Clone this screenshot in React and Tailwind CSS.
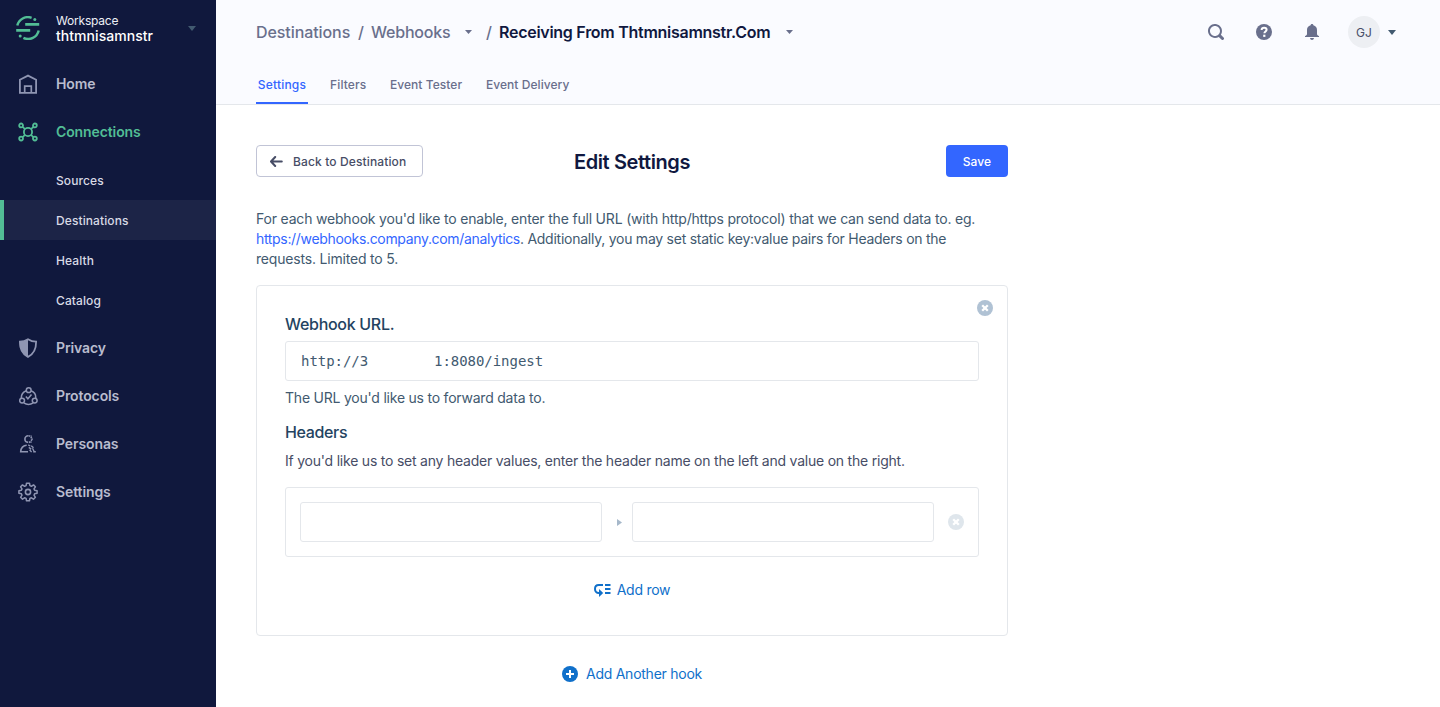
import React from "react";

const Svg = ({ size = 20, box, className = "", children }) => (
  <svg
    width={size}
    height={size}
    viewBox={`0 0 ${box || size} ${box || size}`}
    fill="none"
    className={`shrink-0 ${className}`}
  >
    {children}
  </svg>
);

const Logo = () => (
  <Svg size={24}>
    <g stroke="#52bd95" strokeWidth="2.4">
      <path d="M1.3 9.6A10.8 10.8 0 0 1 15.6 1.8" />
      <path d="M22.7 14.4A10.8 10.8 0 0 1 7.4 21.8" />
      <path d="M9.2 8.4H23.2M0.2 14.4H14.2" strokeWidth="2.6" />
    </g>
    <circle cx="18.8" cy="3.4" r="1.5" fill="#52bd95" />
    <circle cx="4.2" cy="20" r="1.5" fill="#52bd95" />
  </Svg>
);

const HomeIcon = () => (
  <Svg>
    <path d="M1.9 18.9V5.8L10 1.6l8.1 4.2v13.1H1.9Z" stroke="currentColor" strokeWidth="1.8" />
    <path d="M6.7 18.5v-6.300h6.600v6.300" stroke="currentColor" strokeWidth="1.700" />
  </Svg>
);

const ConnectionsIcon = () => (
  <Svg>
    <g stroke="currentColor" strokeWidth="1.8">
      <circle cx="3.1" cy="3.4" r="1.9" />
      <circle cx="16.9" cy="3.4" r="1.9" />
      <circle cx="3.1" cy="16.6" r="1.9" />
      <circle cx="16.9" cy="16.6" r="1.9" />
      <circle cx="10" cy="10" r="4.1" />
      <path d="M4.5 4.8 7.1 7.1M15.5 4.8l-2.6 2.3M4.5 15.2l2.6-2.3M15.5 15.2l-2.6-2.3" />
    </g>
  </Svg>
);

const PrivacyIcon = () => (
  <Svg>
    <path d="M10 1.2C7.3 2.9 4.6 3.6 1.9 3.7 1.8 10.5 4.2 15.9 10 18.9c5.8-3 8.2-8.4 8.1-15.2C15.4 3.6 12.7 2.9 10 1.2Z" stroke="currentColor" strokeWidth="1.8" />
    <path d="M10 1C7.3 2.9 4.6 3.6 1.5 3.7 1.4 10.5 4.2 16 10 19V1Z" fill="currentColor" />
  </Svg>
);

const ProtocolsIcon = () => (
  <Svg>
    <g stroke="currentColor" strokeWidth="1.5">
      <circle cx="10.7" cy="4.2" r="2.4" />
      <circle cx="4.1" cy="14.6" r="2.4" />
      <circle cx="16.7" cy="14.6" r="2.4" />
      <path d="M8.3 4.8C5.2 5.9 3.2 8.7 3.3 12.2M13.1 4.8c3 1.1 4.9 4 4.6 7.4M5.8 16.9c2.8 1.9 6.6 1.9 9.4 0" />
      <path d="m7.9 10.6 2 2.2 3.6-4.2" />
    </g>
  </Svg>
);

const PersonasIcon = () => (
  <Svg>
    <g stroke="currentColor" strokeWidth="1.6">
      <path d="M10.2 1.8a3.3 3.3 0 1 0 0 6.600" />
      <path d="M10.4 1.8a3.3 3.3 0 0 1 0 6.600" strokeDasharray="1.700 0.900" />
      <path d="M13.600 5.100h1.200M12.700 2.500l.8-.8M12.700 7.700l.8.8" strokeWidth="1.200" />
      <path d="M10 17.800H2.700c0-3.700 2.600-6.500 6-6.600" />
      <path d="M10.200 10.900 12.300 12M10.800 13.400l2.400 1.700M13.200 11.800l2.300 2M11.600 15.700l2 2.400M14.500 14.300l1.600 3.200M15.200 17.800h2.600" strokeWidth="1.400" />
    </g>
  </Svg>
);

const GearIcon = () => (
  <Svg>
    <path
      d="M8.5 1.2h3l.4 2.4 1.500.7 2.100-1.400 1.900 1.900L16 6.900l.6 1.400 2.500.400v2.600l-2.500.500-.600 1.400 1.400 2.100-1.900 1.900-2.100-1.400-1.500.600-.400 2.400h-3L8.100 16.400l-1.500-.600-2.100 1.400-1.900-1.900L4 13.200l-.600-1.400-2.500-.500V8.700l2.500-.400L4 6.900 2.600 4.800l1.900-1.900 2.100 1.400 1.500-.700.400-2.400Z"
      stroke="currentColor"
      strokeWidth="1.500"
      strokeLinejoin="round"
    />
    <circle cx="10" cy="10" r="2.600" stroke="currentColor" strokeWidth="1.600" />
  </Svg>
);

const Caret = ({ className }) => (
  <svg width="8" height="5" viewBox="0 0 8 5" className={`shrink-0 ${className}`}>
    <path d="M0 0h8L4 5Z" fill="currentColor" />
  </svg>
);

const CloseCircle = ({ className }) => (
  <Svg size={16} className={className}>
    <circle cx="8" cy="8" r="8" fill="currentColor" />
    <path d="m5.200 5.200 5.600 5.600m0-5.600-5.600 5.600" stroke="#fff" strokeWidth="2.300" />
  </Svg>
);

const NavItem = ({ icon, label, active }) => (
  <a
    className={`flex h-12 items-center gap-[18px] pl-[18px] text-[14px] font-semibold tracking-[-0.11px] ${
      active ? "text-[#52bd95]" : "text-[#8f95b2]"
    }`}
  >
    {icon}
    <span className={active ? "pb-0.5" : "pb-0.5 text-[#b9bcce]"}>{label}</span>
  </a>
);

const SubItem = ({ label, active }) => (
  <a
    className={`flex h-10 items-center border-l-4 pt-0.5 pl-[52px] text-[12px] font-medium tracking-[0.1px] text-[#d8dae5] ${
      active ? "border-[#52bd95] bg-[#1c2447]" : "border-transparent"
    }`}
  >
    {label}
  </a>
);

const Sidebar = () => (
  <nav className="flex w-[216px] shrink-0 flex-col bg-[#10183d]">
    <div className="flex h-[60px] items-center pb-1 pl-4">
      <Logo />
      <div className="ml-4 flex w-[132px] flex-col text-white">
        <span className="pt-px text-[12px] leading-[15px] tracking-[-0.2px] text-[#edeff5]">Workspace</span>
        <span className="text-[14px] leading-4 font-medium tracking-[0.05px]">thtmnisamnstr</span>
      </div>
      <Caret className="text-[#425a70]" />
    </div>
    <NavItem icon={<HomeIcon />} label="Home" />
    <NavItem icon={<ConnectionsIcon />} label="Connections" active />
    <div className="py-1">
      <SubItem label="Sources" />
      <SubItem label="Destinations" active />
      <SubItem label="Health" />
      <SubItem label="Catalog" />
    </div>
    <NavItem icon={<PrivacyIcon />} label="Privacy" />
    <NavItem icon={<ProtocolsIcon />} label="Protocols" />
    <NavItem icon={<PersonasIcon />} label="Personas" />
    <NavItem icon={<GearIcon />} label="Settings" />
  </nav>
);

const SmallCaret = () => (
  <svg width="7" height="4" viewBox="0 0 7 4" className="shrink-0">
    <path d="M0 0h7L3.500 4Z" fill="currentColor" />
  </svg>
);

const Header = () => (
  <header className="flex h-[105px] flex-col border-b border-[#e4e7eb] bg-[#fafbff] pl-10">
    <div className="flex h-16 items-center justify-between pr-11">
      <div className="flex items-center text-[16px] font-medium text-[#696f8c]">
        <span className="w-[102px] whitespace-nowrap tracking-[-0.08px]">Destinations</span>
        <span className="w-[13px]">/</span>
        <span className="w-[94px] whitespace-nowrap tracking-[-0.2px]">Webhooks</span>
        <SmallCaret />
        <span className="ml-3.5 w-[13px]">/</span>
        <span className="w-[287px] whitespace-nowrap font-semibold tracking-[-0.27px] text-[#101840]">
          Receiving From Thtmnisamnstr.Com
        </span>
        <SmallCaret />
      </div>
      <div className="flex items-center text-[#696f8c]">
        <Svg size={16}>
          <path
            d="M15.550 13.430l-2.670-2.680a6.940 6.940 0 001.110-3.760c0-3.870-3.130-7-7-7s-7 3.130-7 7 3.130 7 7 7c1.390 0 2.680-.420 3.760-1.110l2.680 2.670a1.498 1.498 0 102.120-2.120zm-8.560-1.440c-2.760 0-5-2.240-5-5s2.240-5 5-5 5 2.240 5 5-2.240 5-5 5z"
            fill="currentColor"
          />
        </Svg>
        <Svg size={16} className="ml-8">
          <circle cx="8" cy="8" r="8" fill="currentColor" />
          <path d="M5.600 6c.1-1.400 1.100-2.200 2.500-2.200 1.500 0 2.500.8 2.500 2 0 1.600-2.200 1.700-2.200 3.500" stroke="#fff" strokeWidth="2" />
          <path d="M7.200 10.700h2.200v2.200H7.200z" fill="#fff" />
        </Svg>
        <Svg size={16} className="ml-8">
          <path d="M8 0c.8 0 1.300.5 1.400 1.200C11.700 1.800 13 3.600 13 6v4.200c.2.8.8 1.200 2 1.800v1H1v-1c1.200-.6 1.800-1 2-1.800V6c0-2.400 1.300-4.200 3.600-4.800C6.700.5 7.200 0 8 0ZM6 14h4c-.2 1.200-1 2-2 2s-1.800-.8-2-2Z" fill="currentColor" />
        </Svg>
        <span className="ml-7 flex size-8 items-center justify-center rounded-full bg-[#edeff3] pt-px text-[12px] text-[#474d66]">
          GJ
        </span>
        <Caret className="ml-2 text-[#425a70]" />
      </div>
    </div>
    <div className="flex h-10 text-[12px] font-medium tracking-[0.05px] whitespace-nowrap text-[#696f8c]">
      <span className="flex w-[52px] items-center justify-center rounded-t-[1px] border-b-2 border-[#3366ff] pt-1 tracking-[0.2px] text-[#3366ff]">
        Settings
      </span>
      <span className="ml-[22px] flex w-[60px] items-center pt-0.5 tracking-[0.15px]">Filters</span>
      <span className="flex w-24 items-center pt-0.5">Event Tester</span>
      <span className="flex items-center pt-0.5">Event Delivery</span>
    </div>
  </header>
);

const AddRowIcon = () => (
  <svg width="17" height="13" viewBox="0 0 17 13" className="shrink-0">
    <path d="M9 1.100H4.700C2.500 1.100 1 2.700 1 4.900s1.500 4 3.700 4H6" fill="none" stroke="currentColor" strokeWidth="2" />
    <path d="M5 5.100 9.200 9 5 12.900Z" fill="currentColor" />
    <path d="M11 0h5.500v2H11zM11 4h5.500v2H11zM11 8h5.500v2H11z" fill="currentColor" />
  </svg>
);

const HeaderRow = () => (
  <div className="mt-4 flex h-[70px] items-center rounded-[3px] border border-[#e4e7eb] pl-3.5">
    <input className="h-10 w-[302px] rounded-[3px] border border-[#e4e7eb] bg-white" />
    <svg width="5" height="7" viewBox="0 0 5 7" className="mr-[10px] ml-[15px] shrink-0">
      <path d="M0 0 5 3.500 0 7Z" fill="#a6b8ca" />
    </svg>
    <input className="h-10 w-[302px] rounded-[3px] border border-[#e4e7eb] bg-white" />
    <CloseCircle className="ml-3.5 text-[#dfe6ec]" />
  </div>
);

const WebhookCard = () => (
  <section className="relative mt-4 h-[351px] rounded-[4px] border border-[#e4e7eb] px-7 pt-7">
    <CloseCircle className="absolute top-3.5 right-3.5 text-[#b0c2d4]" />
    <h2 className="h-[27px] text-[16px] leading-[21px] font-medium tracking-[-0.3px] text-[#234361]">Webhook URL.</h2>
    <div className="flex h-10 items-center rounded-[3px] border border-[#e4e7eb] pl-[15px] font-['DejaVu_Sans_Mono',monospace] text-[14px] tracking-[-0.04px] text-[#425a70]">
      <span className="w-[133px]">http://3</span>
      <span>1:8080/ingest</span>
    </div>
    <p className="mt-[7px] text-[14px] leading-5 tracking-[-0.22px] text-[#425a70]">
      The URL you'd like us to forward data to.
    </p>
    <h2 className="mt-3.5 text-[16px] leading-5 font-medium tracking-[-0.35px] text-[#234361]">Headers</h2>
    <p className="mt-[9px] text-[14px] leading-5 tracking-[-0.22px] text-[#474d66]">
      If you'd like us to set any header values, enter the header name on the left and value on the right.
    </p>
    <HeaderRow />
    <a className="mt-[23px] flex items-center justify-center gap-1.5 text-[14px] leading-5 tracking-[-0.25px] text-[#1070ca]">
      <AddRowIcon />
      Add row
    </a>
  </section>
);

export default function App() {
  return (
    <div className="flex h-[707px] w-[1440px] overflow-hidden bg-white font-['Inter',sans-serif]">
      <Sidebar />
      <div className="flex min-w-0 flex-1 flex-col">
        <Header />
        <main className="w-[792px] pt-10 pl-10">
          <div className="grid h-8 grid-cols-[167px_1fr_167px] items-center">
            <button className="flex h-8 items-center rounded-[4px] border border-[#c1c4d6] pl-[13px] text-[12px] font-medium tracking-[0.13px] whitespace-nowrap text-[#474d66]">
              <svg width="13" height="11" viewBox="0 0 13 11" className="mr-[10px] shrink-0" fill="none">
                <path d="M5.200 1 1 5.500 5.200 10M1.500 5.500h10.300" stroke="currentColor" strokeWidth="2" strokeLinecap="round" strokeLinejoin="round" />
              </svg>
              <span className="pt-px">Back to Destination</span>
            </button>
            <h1 className="pt-px text-center text-[20px] font-semibold tracking-[-0.4px] text-[#101840]">Edit Settings</h1>
            <button className="h-8 w-[62px] justify-self-end rounded-[4px] bg-[#3366ff] pt-px text-[12px] font-medium tracking-[0.1px] text-white">
              Save
            </button>
          </div>
          <p className="mt-8 text-[14px] leading-5 tracking-[-0.19px] whitespace-nowrap text-[#425a70]">
            For each webhook you'd like to enable, enter the full URL (with http/https protocol) that we can send data to. eg.
            <br />
            <a className="tracking-[-0.33px] text-[#3366ff]">https://webhooks.company.com/analytics</a>
            <span className="tracking-[-0.25px]">
              . Additionally, you may set static key:value pairs for Headers on the
            </span>
            <br />
            requests. Limited to 5.
          </p>
          <WebhookCard />
          <a className="mt-7 flex items-center justify-center gap-2 text-[14px] leading-5 tracking-[-0.25px] text-[#1070ca]">
            <Svg size={16}>
              <circle cx="8" cy="8" r="8" fill="currentColor" />
              <path d="M8 4v8M4 8h8" stroke="#fff" strokeWidth="2" />
            </Svg>
            Add Another hook
          </a>
        </main>
      </div>
    </div>
  );
}
